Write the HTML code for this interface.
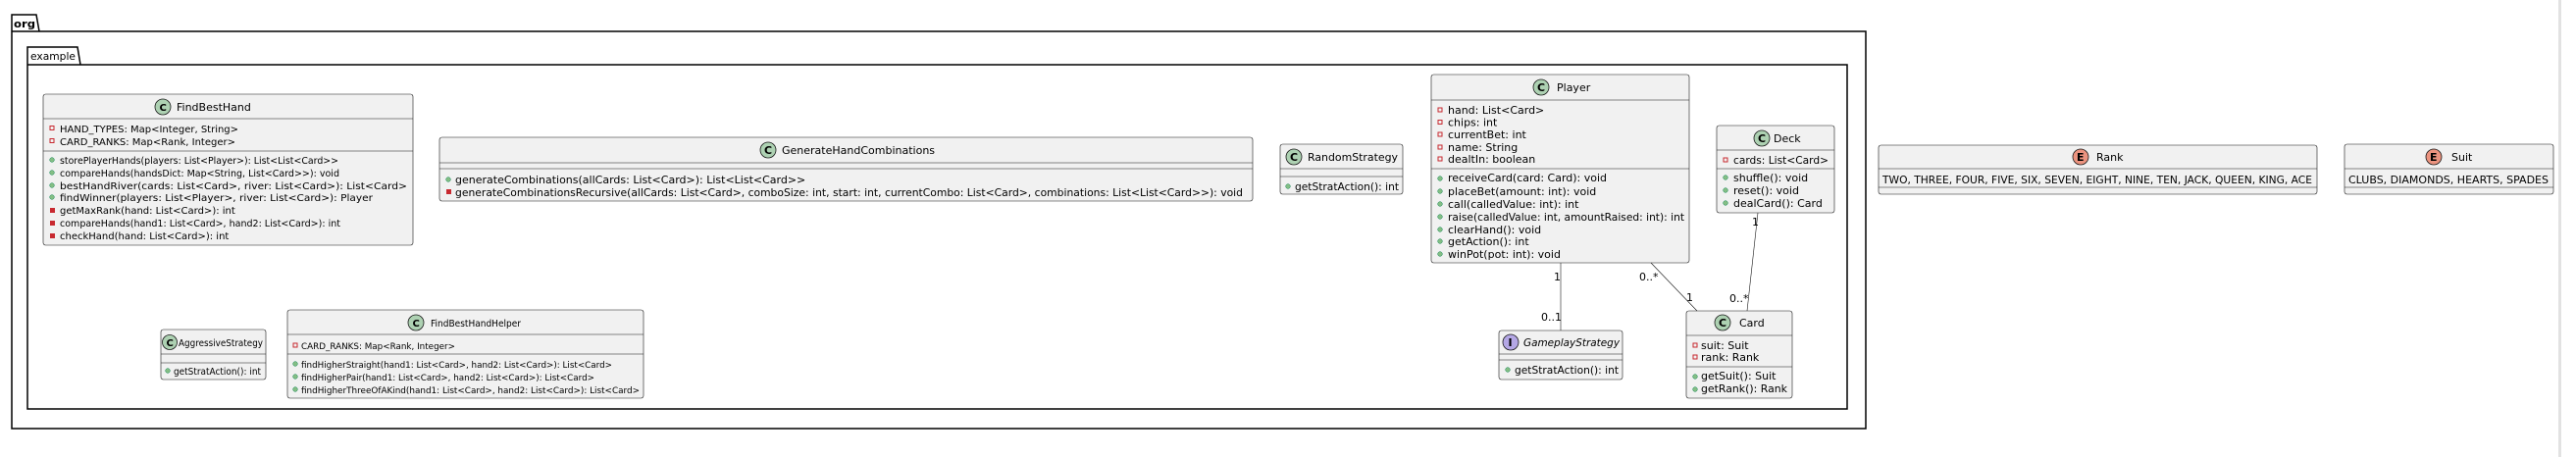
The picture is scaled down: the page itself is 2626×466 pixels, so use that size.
<!DOCTYPE html>
<html><head><meta charset="utf-8"><style>
html,body{margin:0;padding:0;background:#fff;}
svg{display:block;}
text{font-family:"DejaVu Sans","Liberation Sans",sans-serif;font-size:11px;fill:#000;}
.s10 text{font-size:10px;}
.s9 text{font-size:9.2px;}
.b{fill:#F1F1F1;stroke:#181818;stroke-width:0.6;}
.l{stroke:#181818;stroke-width:0.6;}
.pk{fill:none;stroke:#000;stroke-width:1.5;}
.pv{fill:none;stroke:#C82930;stroke-width:1;}
.pm{fill:#C82930;}
.pu{fill:#84BE84;stroke:#038048;stroke-width:0.5;}
</style></head><body>
<svg width="2626" height="466" viewBox="0 0 2626 466" xmlns="http://www.w3.org/2000/svg">
<rect x="2608" y="0" width="3" height="466" fill="#e2e2e2"/>
<!-- org package -->
<path class="pk" d="M12,32 L12,15 L37,15 L40,32 M12,32 L1902,32 L1902,437 L12,437 Z"/>
<text x="14" y="28" style="font-weight:bold" textLength="22" lengthAdjust="spacingAndGlyphs">org</text>
<path class="pk" d="M28,66 L28,48 L79,48 L82,66 M28,66 L1883,66 L1883,417 L28,417 Z"/>
<text x="31" y="61" textLength="46" lengthAdjust="spacingAndGlyphs">example</text>

<!-- FindBestHand -->
<g class="s10">
<rect class="b" x="44" y="96" width="377" height="154" rx="2.5"/>
<line class="l" x1="44" y1="121" x2="421" y2="121"/><line class="l" x1="44" y1="154" x2="421" y2="154"/>
<circle cx="166" cy="109" r="8" fill="#ADD1B2" stroke="#181818" stroke-width="0.8"/><text x="162.5" y="113" style="font-weight:bold">C</text>
<text x="180" y="113" style="font-size:11px">FindBestHand</text>
<rect class="pv" x="51" y="128.5" width="4" height="4"/><text x="61" y="135">HAND_TYPES: Map&lt;Integer, String&gt;</text>
<rect class="pv" x="51" y="141.5" width="4" height="4"/><text x="61" y="148">CARD_RANKS: Map&lt;Rank, Integer&gt;</text>
<circle class="pu" cx="53" cy="163" r="2.3"/><text x="61" y="167" textLength="284" lengthAdjust="spacingAndGlyphs">storePlayerHands(players: List&lt;Player&gt;): List&lt;List&lt;Card&gt;&gt;</text>
<circle class="pu" cx="53" cy="176" r="2.3"/><text x="61" y="180" textLength="285" lengthAdjust="spacingAndGlyphs">compareHands(handsDict: Map&lt;String, List&lt;Card&gt;&gt;): void</text>
<circle class="pu" cx="53" cy="189" r="2.3"/><text x="61" y="193" textLength="354" lengthAdjust="spacingAndGlyphs">bestHandRiver(cards: List&lt;Card&gt;, river: List&lt;Card&gt;): List&lt;Card&gt;</text>
<circle class="pu" cx="53" cy="201" r="2.3"/><text x="61" y="205" textLength="319" lengthAdjust="spacingAndGlyphs">findWinner(players: List&lt;Player&gt;, river: List&lt;Card&gt;): Player</text>
<rect class="pm" x="51" y="212" width="5" height="5"/><text x="61" y="218">getMaxRank(hand: List&lt;Card&gt;): int</text>
<rect class="pm" x="51" y="225" width="5" height="5"/><text x="61" y="231" textLength="286" lengthAdjust="spacingAndGlyphs">compareHands(hand1: List&lt;Card&gt;, hand2: List&lt;Card&gt;): int</text>
<rect class="pm" x="51" y="238" width="5" height="5"/><text x="61" y="244">checkHand(hand: List&lt;Card&gt;): int</text>
</g>

<!-- GenerateHandCombinations -->
<rect class="b" x="448" y="140" width="829" height="65" rx="2.5"/>
<line class="l" x1="448" y1="166" x2="1277" y2="166"/><line class="l" x1="448" y1="172" x2="1277" y2="172"/>
<circle cx="783" cy="153" r="8" fill="#ADD1B2" stroke="#181818" stroke-width="0.8"/><text x="779" y="157" style="font-weight:bold">C</text>
<text x="797" y="157">GenerateHandCombinations</text>
<circle class="pu" cx="457" cy="183" r="2.3"/><text x="464" y="187">generateCombinations(allCards: List&lt;Card&gt;): List&lt;List&lt;Card&gt;&gt;</text>
<rect class="pm" x="455" y="193" width="5" height="5"/><text x="464" y="200" textLength="803" lengthAdjust="spacingAndGlyphs">generateCombinationsRecursive(allCards: List&lt;Card&gt;, comboSize: int, start: int, currentCombo: List&lt;Card&gt;, combinations: List&lt;List&lt;Card&gt;&gt;): void</text>

<!-- RandomStrategy -->
<rect class="b" x="1305" y="147" width="125" height="51" rx="2.5"/>
<line class="l" x1="1305" y1="172" x2="1430" y2="172"/><line class="l" x1="1305" y1="180" x2="1430" y2="180"/>
<circle cx="1319" cy="160" r="8" fill="#ADD1B2" stroke="#181818" stroke-width="0.8"/><text x="1315" y="164" style="font-weight:bold">C</text>
<text x="1333" y="164" textLength="92" lengthAdjust="spacingAndGlyphs">RandomStrategy</text>
<circle class="pu" cx="1313" cy="190" r="2.3"/><text x="1320" y="194" textLength="106" lengthAdjust="spacingAndGlyphs">getStratAction(): int</text>

<!-- Player -->
<rect class="b" x="1459" y="76" width="263" height="192" rx="2.5"/>
<line class="l" x1="1459" y1="102" x2="1722" y2="102"/><line class="l" x1="1459" y1="172" x2="1722" y2="172"/>
<circle cx="1571" cy="89" r="8" fill="#ADD1B2" stroke="#181818" stroke-width="0.8"/><text x="1567" y="93" style="font-weight:bold">C</text>
<text x="1587" y="93">Player</text>
<rect class="pv" x="1466" y="110" width="4" height="4"/><text x="1476" y="116">hand: List&lt;Card&gt;</text>
<rect class="pv" x="1466" y="122.5" width="4" height="4"/><text x="1476" y="128.5">chips: int</text>
<rect class="pv" x="1466" y="135" width="4" height="4"/><text x="1476" y="141">currentBet: int</text>
<rect class="pv" x="1466" y="148" width="4" height="4"/><text x="1476" y="154">name: String</text>
<rect class="pv" x="1466" y="160" width="4" height="4"/><text x="1476" y="166">dealtIn: boolean</text>
<circle class="pu" cx="1468" cy="182" r="2.3"/><text x="1476" y="185">receiveCard(card: Card): void</text>
<circle class="pu" cx="1468" cy="195" r="2.3"/><text x="1476" y="199">placeBet(amount: int): void</text>
<circle class="pu" cx="1468" cy="208" r="2.3"/><text x="1476" y="212">call(calledValue: int): int</text>
<circle class="pu" cx="1468" cy="221" r="2.3"/><text x="1476" y="225" textLength="241" lengthAdjust="spacingAndGlyphs">raise(calledValue: int, amountRaised: int): int</text>
<circle class="pu" cx="1468" cy="234" r="2.3"/><text x="1476" y="238">clearHand(): void</text>
<circle class="pu" cx="1468" cy="246" r="2.3"/><text x="1476" y="250">getAction(): int</text>
<circle class="pu" cx="1468" cy="259" r="2.3"/><text x="1476" y="263">winPot(pot: int): void</text>

<!-- Deck -->
<rect class="b" x="1750" y="128" width="120" height="89" rx="2.5"/>
<line class="l" x1="1750" y1="153" x2="1870" y2="153"/><line class="l" x1="1750" y1="172" x2="1870" y2="172"/>
<circle cx="1796" cy="141" r="8" fill="#ADD1B2" stroke="#181818" stroke-width="0.8"/><text x="1792" y="145" style="font-weight:bold">C</text>
<text x="1808" y="145">Deck</text>
<rect class="pv" x="1757" y="161" width="4" height="4"/><text x="1767" y="167" textLength="97" lengthAdjust="spacingAndGlyphs">cards: List&lt;Card&gt;</text>
<circle class="pu" cx="1759" cy="181" r="2.3"/><text x="1767" y="185">shuffle(): void</text>
<circle class="pu" cx="1759" cy="194" r="2.3"/><text x="1767" y="198">reset(): void</text>
<circle class="pu" cx="1759" cy="207" r="2.3"/><text x="1767" y="211">dealCard(): Card</text>

<!-- Card -->
<rect class="b" x="1719" y="317" width="108" height="89" rx="2.5"/>
<line class="l" x1="1719" y1="342" x2="1827" y2="342"/><line class="l" x1="1719" y1="374" x2="1827" y2="374"/>
<circle cx="1756" cy="329" r="8" fill="#ADD1B2" stroke="#181818" stroke-width="0.8"/><text x="1752" y="333" style="font-weight:bold">C</text>
<text x="1773" y="333">Card</text>
<rect class="pv" x="1726" y="350" width="4" height="4"/><text x="1734" y="356">suit: Suit</text>
<rect class="pv" x="1726" y="362" width="4" height="4"/><text x="1734" y="368">rank: Rank</text>
<circle class="pu" cx="1728" cy="384" r="2.3"/><text x="1734" y="387">getSuit(): Suit</text>
<circle class="pu" cx="1728" cy="397" r="2.3"/><text x="1734" y="400" textLength="88" lengthAdjust="spacingAndGlyphs">getRank(): Rank</text>

<!-- GameplayStrategy -->
<rect class="b" x="1528" y="337" width="126" height="50" rx="2.5"/>
<line class="l" x1="1528" y1="361" x2="1654" y2="361"/><line class="l" x1="1528" y1="367" x2="1654" y2="367"/>
<circle cx="1540" cy="349" r="8" fill="#B4A7E5" stroke="#181818" stroke-width="0.8"/><text x="1537.5" y="353" style="font-weight:bold">I</text>
<text x="1553" y="353" style="font-style:italic" textLength="98" lengthAdjust="spacingAndGlyphs">GameplayStrategy</text>
<circle class="pu" cx="1537" cy="377" r="2.3"/><text x="1544" y="381" textLength="106" lengthAdjust="spacingAndGlyphs">getStratAction(): int</text>

<!-- AggressiveStrategy -->
<rect class="b" x="164" y="336" width="107" height="51" rx="2.5"/>
<line class="l" x1="164" y1="361" x2="271" y2="361"/><line class="l" x1="164" y1="370" x2="271" y2="370"/>
<circle cx="173" cy="349" r="7.5" fill="#ADD1B2" stroke="#181818" stroke-width="0.8"/><text x="169.5" y="353" style="font-weight:bold;font-size:10px">C</text>
<text x="182" y="353" style="font-size:10px" textLength="86" lengthAdjust="spacingAndGlyphs">AggressiveStrategy</text>
<circle class="pu" cx="171" cy="378" r="2.3"/><text x="177" y="382" style="font-size:10px" textLength="89" lengthAdjust="spacingAndGlyphs">getStratAction(): int</text>

<!-- FindBestHandHelper -->
<g class="s9">
<rect class="b" x="293" y="316" width="363" height="90" rx="2.5"/>
<line class="l" x1="293" y1="341" x2="656" y2="341"/><line class="l" x1="293" y1="361" x2="656" y2="361"/>
<circle cx="424" cy="329" r="8" fill="#ADD1B2" stroke="#181818" stroke-width="0.8"/><text x="420.5" y="333" style="font-weight:bold;font-size:10px">C</text>
<text x="439" y="333" style="font-size:10px" textLength="92" lengthAdjust="spacingAndGlyphs">FindBestHandHelper</text>
<rect class="pv" x="299" y="350" width="4" height="4"/><text x="307" y="356" textLength="157" lengthAdjust="spacingAndGlyphs">CARD_RANKS: Map&lt;Rank, Integer&gt;</text>
<circle class="pu" cx="301" cy="371" r="2.3"/><text x="307" y="375" textLength="317" lengthAdjust="spacingAndGlyphs">findHigherStraight(hand1: List&lt;Card&gt;, hand2: List&lt;Card&gt;): List&lt;Card&gt;</text>
<circle class="pu" cx="301" cy="384" r="2.3"/><text x="307" y="388" textLength="299" lengthAdjust="spacingAndGlyphs">findHigherPair(hand1: List&lt;Card&gt;, hand2: List&lt;Card&gt;): List&lt;Card&gt;</text>
<circle class="pu" cx="301" cy="397" r="2.3"/><text x="307" y="401" textLength="345" lengthAdjust="spacingAndGlyphs">findHigherThreeOfAKind(hand1: List&lt;Card&gt;, hand2: List&lt;Card&gt;): List&lt;Card&gt;</text>
</g>

<!-- Rank -->
<rect class="b" x="1915" y="148" width="447" height="50" rx="2.5"/>
<line class="l" x1="1915" y1="172" x2="2362" y2="172"/><line class="l" x1="1915" y1="191" x2="2362" y2="191"/>
<circle cx="2121" cy="160" r="8" fill="#EB937F" stroke="#181818" stroke-width="0.8"/><text x="2117" y="164" style="font-weight:bold">E</text>
<text x="2137" y="164">Rank</text>
<text x="1919" y="187" textLength="438" lengthAdjust="spacingAndGlyphs">TWO, THREE, FOUR, FIVE, SIX, SEVEN, EIGHT, NINE, TEN, JACK, QUEEN, KING, ACE</text>

<!-- Suit -->
<rect class="b" x="2390" y="147" width="213" height="51" rx="2.5"/>
<line class="l" x1="2390" y1="172" x2="2603" y2="172"/><line class="l" x1="2390" y1="191" x2="2603" y2="191"/>
<circle cx="2481" cy="160" r="8" fill="#EB937F" stroke="#181818" stroke-width="0.8"/><text x="2477" y="164" style="font-weight:bold">E</text>
<text x="2499" y="164">Suit</text>
<text x="2394" y="187" textLength="204" lengthAdjust="spacingAndGlyphs">CLUBS, DIAMONDS, HEARTS, SPADES</text>

<!-- connectors -->
<line class="l" x1="1591" y1="268" x2="1591" y2="337"/>
<text x="1584" y="286">1</text>
<text x="1571" y="327">0..1</text>
<line class="l" x1="1683" y1="268" x2="1730" y2="317"/>
<text x="1671" y="286">0..*</text>
<text x="1719" y="307">1</text>
<line class="l" x1="1792" y1="217" x2="1781" y2="317"/>
<text x="1786" y="230">1</text>
<text x="1763" y="308">0..*</text>
</svg>
</body></html>
